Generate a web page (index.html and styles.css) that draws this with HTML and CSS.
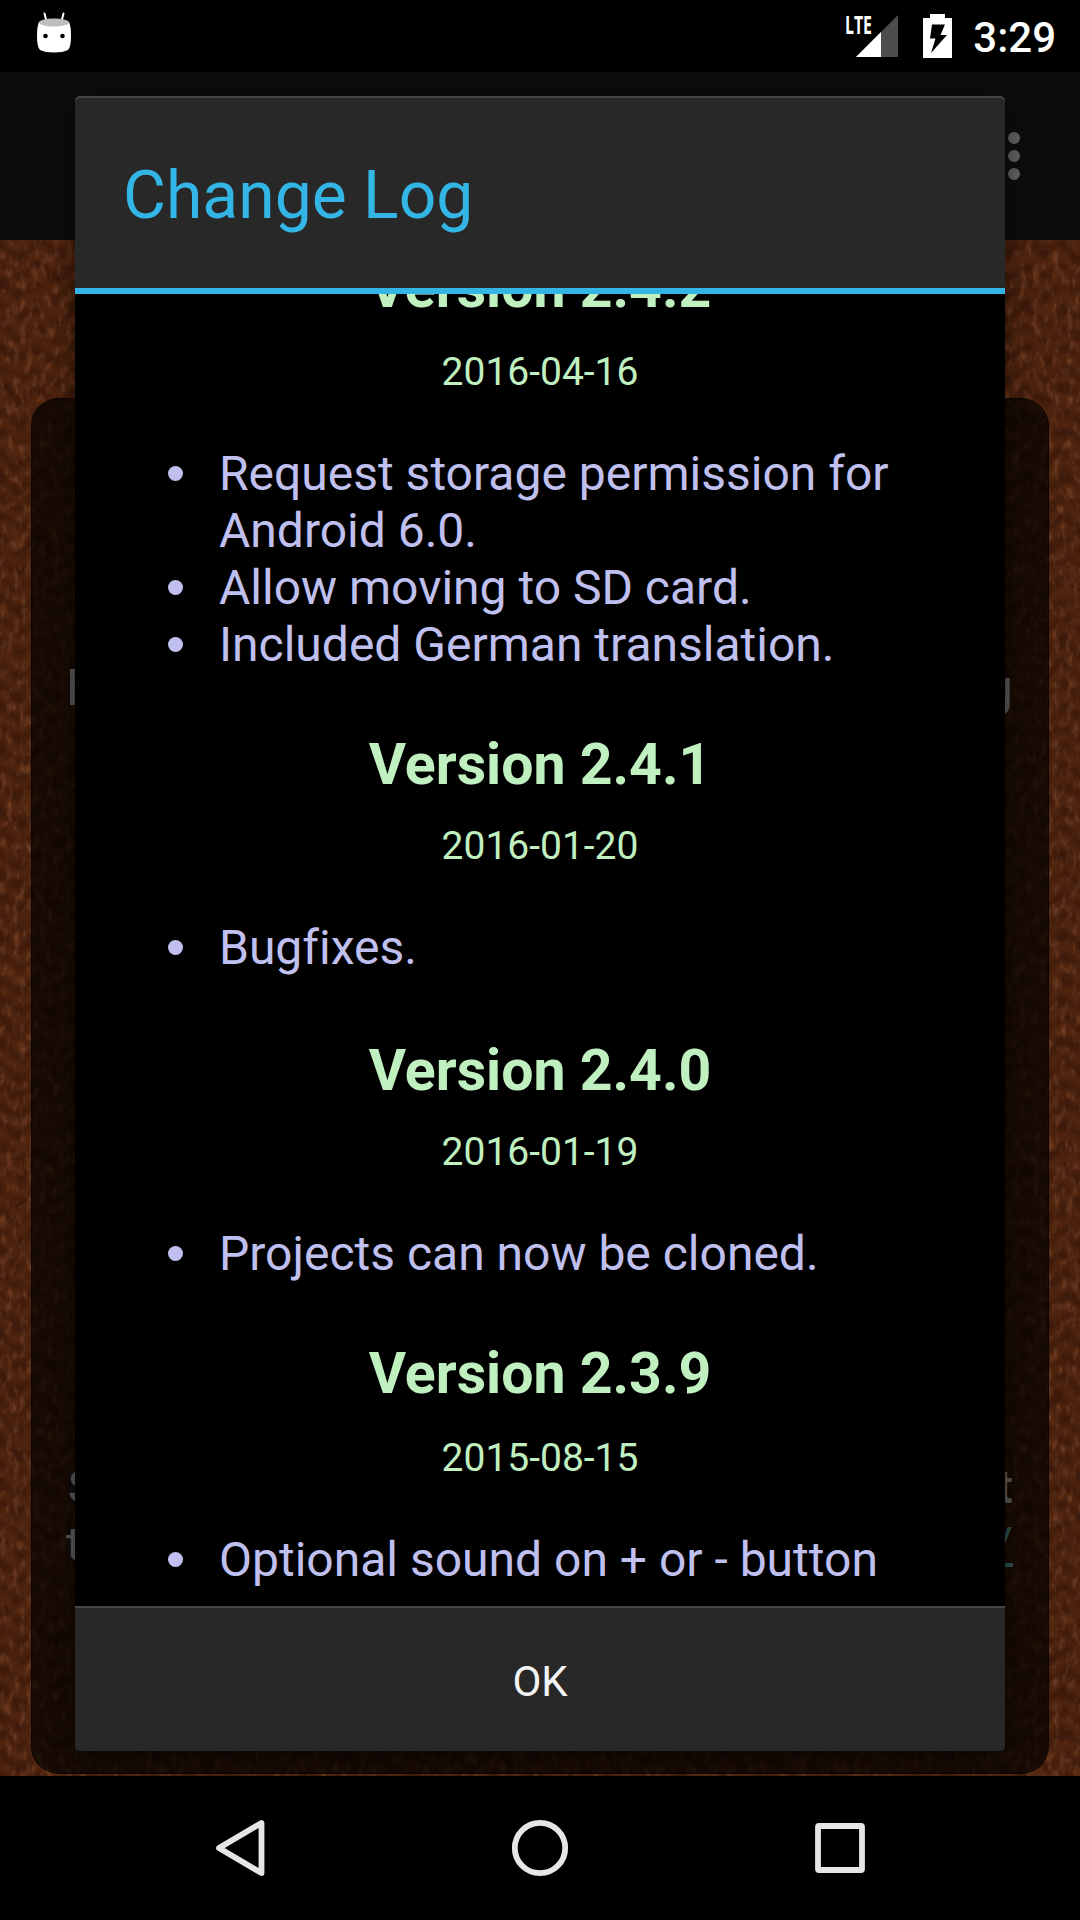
FILE: index.html
```html
<!DOCTYPE html>
<html lang="en">
<head>
<meta charset="utf-8">
<title>Change Log</title>
<link rel="stylesheet" href="styles.css">
</head>
<body>
<div class="screen">
  <header class="status">
    <svg class="robot" width="36" height="42" viewBox="0 0 36 42">
      <path d="M8.500 1.500l2 8M27.500 1.500l-2 8" stroke="#fff" stroke-width="2" stroke-linecap="round"/>
      <path d="M3 10Q1 14 1 24Q1 35 4 38Q9 40.500 18 40.500Q27 40.500 32 38Q35 35 35 24Q35 14 33 10Q28 7 18 7Q8 7 3 10Z" fill="#fff"/>
      <ellipse cx="18" cy="10.500" rx="15" ry="4" fill="#bdbdbd"/>
      <circle cx="9.500" cy="24" r="2.300"/><circle cx="26.500" cy="24" r="2.300"/>
    </svg>
    <div class="system">
      <svg class="signal" width="54" height="44" viewBox="0 0 54 44">
        <path d="M53 1V43H11Z" fill="#4d4d4d"/><path d="M36 18V43H11Z" fill="#fff"/>
        <text x="0" y="19.500" class="lte" textLength="27" lengthAdjust="spacingAndGlyphs">LTE</text>
      </svg>
      <svg class="battery" width="29" height="44" viewBox="0 0 29 44">
        <path d="M7 0H22V4H29V44H0V4H7Z" fill="#fff"/>
        <path d="M9 10.500H22L17.500 21H24L8 39L12.500 24.500H7Z" fill="#000"/>
      </svg>
      <span class="clock">3:29</span>
    </div>
  </header>
  <main class="app">
    <div class="actionbar">
      <svg class="more" width="12" height="48" viewBox="0 0 12 48" fill="#616161"><circle cx="6" cy="6" r="6"/><circle cx="6" cy="24" r="6"/><circle cx="6" cy="42" r="6"/></svg>
    </div>
    <section class="fabric">
      <svg class="knit" width="1080" height="1536">
        <defs>
          <pattern id="stitch" width="38" height="21" patternUnits="userSpaceOnUse">
            <rect width="38" height="21" fill="#3a180a"/>
            <path d="M3 -8L16 6M3 13L16 27M35 -8L22 6M35 13L22 27" stroke="#52260f" stroke-width="9" stroke-linecap="round"/>
          </pattern>
          <filter id="wool" x="0" y="0" width="100%" height="100%" color-interpolation-filters="sRGB">
            <feTurbulence type="fractalNoise" baseFrequency="0.03" numOctaves="3" seed="4" result="warp"/>
            <feDisplacementMap in="SourceGraphic" in2="warp" scale="20" xChannelSelector="R" yChannelSelector="G"/>
            <feGaussianBlur stdDeviation="3" result="soft"/>
            <feTurbulence type="fractalNoise" baseFrequency="0.15 0.08" numOctaves="4" seed="9"/>
            <feColorMatrix values=".38 0 0 0 -.19  .28 0 0 0 -.14  .22 0 0 0 -.11  0 0 0 0 1" result="fuzz"/>
            <feComposite in="soft" in2="fuzz" operator="arithmetic" k2="1" k3="1"/>
            <feComponentTransfer><feFuncA type="linear" slope="0" intercept="1"/></feComponentTransfer>
          </filter>
        </defs>
        <rect x="-20" y="-20" width="1120" height="1576" fill="url(#stitch)" filter="url(#wool)"/>
      </svg>
      <div class="panel">
        <p class="hint"><span>H</span><span>g</span></p>
        <p class="support first"><span>S</span><span>t</span></p>
        <p class="support"><span>t</span><span class="link">/</span></p>
      </div>
    </section>
    <div class="dialog">
      <h1>Change Log</h1>
      <div class="log">
        <article class="tall"><h2>Version 2.4.2</h2><time>2016-04-16</time>
          <ul><li>Request storage permission for Android 6.0.</li><li>Allow moving to SD card.</li><li>Included German translation.</li></ul></article>
        <article><h2>Version 2.4.1</h2><time>2016-01-20</time><ul><li>Bugfixes.</li></ul></article>
        <article><h2>Version 2.4.0</h2><time>2016-01-19</time><ul><li>Projects can now be cloned.</li></ul></article>
        <article class="tall"><h2>Version 2.3.9</h2><time>2015-08-15</time><ul><li>Optional sound on + or - button</li></ul></article>
      </div>
      <button class="ok">OK</button>
    </div>
  </main>
  <nav class="nav">
    <svg width="58" height="60" viewBox="0 0 58 60"><path d="M50.500 5V55L8 30Z"/></svg>
    <svg width="60" height="60" viewBox="0 0 60 60"><circle cx="30" cy="30" r="25.200"/></svg>
    <svg width="58" height="60" viewBox="0 0 58 60"><rect x="7" y="8" width="44" height="44" rx="1"/></svg>
  </nav>
</div>
</body>
</html>
```
FILE: styles.css
```css
* { box-sizing: border-box; margin: 0; padding: 0; }
body { background: #000; font-family: Roboto, sans-serif; color: #fff; font-variant-ligatures: none; }
.screen { width: 1080px; height: 1920px; display: flex; flex-direction: column; overflow: hidden; }
.status { height: 72px; flex: none; display: flex; justify-content: space-between; padding: 0 24px 0 36px; }
.robot { margin-top: 12px; }
.system { display: flex; }
.signal { margin: 14px 24px 0 0; overflow: visible; }
.lte { font: bold 25px "Open Sans", sans-serif; fill: #fff; }
.battery { margin: 14px 21px 0 0; }
.clock { font-size: 42px; line-height: 72px; font-weight: 500; padding-top: 2px; }
.app { position: relative; height: 1704px; flex: none; }
.actionbar { height: 168px; background: #0d0d0d; display: flex; justify-content: flex-end; padding: 60px 60px 0 0; }
.fabric { position: relative; height: 1536px; background: #4c210c; overflow: hidden; padding: 158px 31px 0; }
.knit { position: absolute; inset: 0; }
.panel { position: relative; height: 1376px; border-radius: 28px; background: rgba(0, 0, 0, .68); border: 1px solid rgba(0, 0, 0, .5); padding: 261px 35px 0 34px; color: #5c5c5c; }
.panel p { display: flex; justify-content: space-between; }
.hint { font-size: 50px; line-height: 57px; }
.support { font-size: 47px; line-height: 57px; }
.panel .first { margin-top: 741px; padding-left: 2px; font-weight: 500; }
.link { color: #305252; text-decoration: underline; }
.dialog { position: absolute; left: 75px; top: 24px; width: 930px; height: 1655px; display: flex; flex-direction: column; background: #282828; border-radius: 5px; box-shadow: 0 4px 24px rgba(0, 0, 0, .55), inset 0 2px 0 #464646; overflow: hidden; }
h1 { height: 198px; flex: none; border-bottom: 6px solid #33b5e5; color: #33b5e5; font-size: 66px; font-weight: 400; line-height: 200px; padding-left: 48px; }
.log { height: 1312px; flex: none; overflow: hidden; background: #000; display: flex; flex-direction: column; }
article { flex: none; display: flex; flex-direction: column; color: #c0f0c0; text-align: center; margin-bottom: 62px; }
article:first-child { margin: -39px 0 59px; }
article:nth-child(3) { margin-bottom: 59px; }
h2 { font-size: 57.200px; line-height: 66px; font-weight: 700; }
time { font-size: 39px; line-height: 46px; margin-top: 25px; }
.tall time { margin-top: 28px; }
ul { list-style: none; text-align: left; color: #c0c0f0; font-size: 48px; line-height: 57px; margin-top: 50px; padding: 0 80px 0 144px; }
li { display: grid; }
li::before { content: ""; position: absolute; width: 15px; height: 15px; border-radius: 50%; background: #c0c0f0; margin: 21px 0 0 -51px; }
.ok { flex: 1; border: 0; border-top: 2px solid #464646; background: #282828; color: #f3f3f3; font: 42px Roboto, sans-serif; padding: 4px 0 0; }
.nav { height: 144px; flex: none; background: #000; display: grid; grid-template-columns: repeat(3, 300px); justify-content: center; justify-items: center; padding-top: 42px; }
.nav svg { fill: none; stroke: #e6e6e6; stroke-width: 5.800; stroke-linejoin: round; }
```
